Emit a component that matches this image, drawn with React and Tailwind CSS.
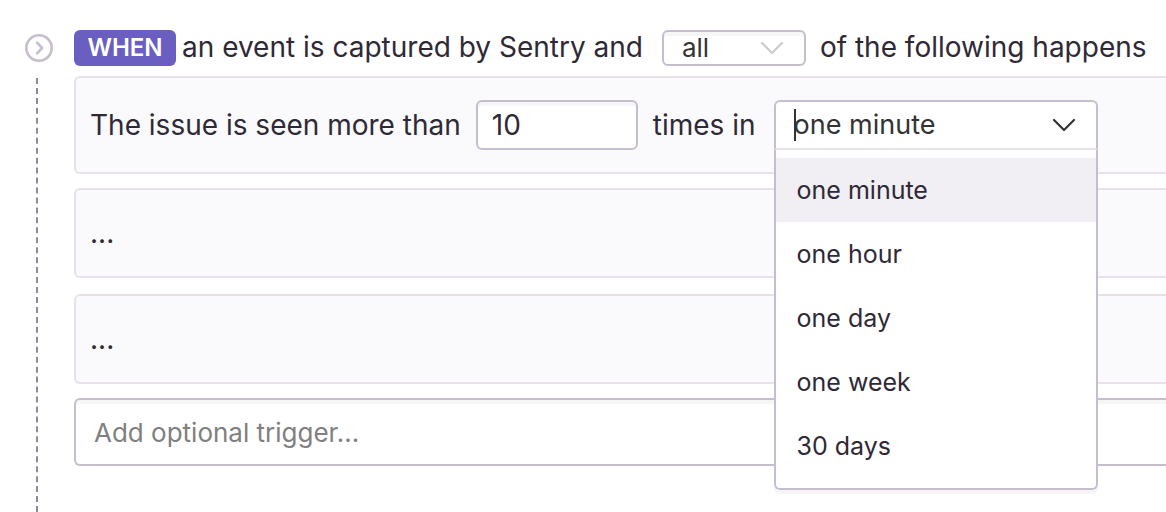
import { useState } from "react";

const intervals = ["one minute", "one hour", "one day", "one week", "30 days"];

function Chevron({ className }) {
  return (
    <svg viewBox="0 0 24 14" className={className} fill="none" stroke="currentColor" strokeWidth="2.2" strokeLinecap="round" strokeLinejoin="round" aria-hidden="true">
      <path d="M2 2 L12 12 L22 2" />
    </svg>
  );
}

function Condition({ children }) {
  return (
    <div className="flex min-h-[90px] items-center rounded-l-md border-2 border-r-0 border-[#e7e1ec] bg-[#fafafc] pl-3.5">
      {children}
    </div>
  );
}

function IntervalPicker() {
  const [value, setValue] = useState(intervals[0]);
  return (
    <div className="relative w-[324px]">
      <div className="relative flex h-[50px] items-center rounded-t-md border-2 border-[#c6becf] border-b-[#e7e1ec] bg-white pr-5 pl-[18px]">
        <span className="absolute left-[18px] h-8 w-0.5 bg-[#333333]" />
        <input
          role="combobox"
          aria-label="Interval"
          aria-expanded="true"
          aria-controls="interval-options"
          readOnly
          value={value}
          className="w-full min-w-0 bg-transparent text-[27px] leading-8 text-[#333333] outline-none"
        />
        <Chevron className="w-6 shrink-0 text-[#333333]" />
      </div>
      <ul
        id="interval-options"
        role="listbox"
        aria-label="Interval options"
        className="absolute inset-x-0 top-full z-10 rounded-b-md border-2 border-t-0 border-[#c6becf] bg-white pt-2 pb-2.5 shadow-[0_4px_0_rgba(43,34,51,0.04)]"
      >
        {intervals.map((item) => (
          <li
            key={item}
            role="option"
            aria-selected={item === value}
            onClick={() => setValue(item)}
            className="flex h-16 items-center px-[21px] text-[25px] leading-8 aria-selected:bg-[#f1eef4]"
          >
            {item}
          </li>
        ))}
      </ul>
    </div>
  );
}

export default function App() {
  return (
    <main className="flex min-h-screen flex-col overflow-hidden bg-white pt-[30px] font-['Inter',sans-serif] text-[28px] leading-[34px] whitespace-nowrap text-[#2f2936]">
      <div className="flex h-9 items-start">
        <div className="w-[74px] shrink-0 pt-[3px] pl-6">
          <svg viewBox="0 0 30 30" className="w-[30px]" fill="none" stroke="#c6becf" strokeWidth="2.6" strokeLinecap="round" strokeLinejoin="round" aria-hidden="true">
            <circle cx="15" cy="15" r="12.7" />
            <path d="M13 9.6 L18.2 15 L13 20.4" />
          </svg>
        </div>
        <span className="flex h-9 w-[102px] shrink-0 items-center justify-center rounded-md bg-[#6a5fc1] text-2xl font-semibold text-white">
          WHEN
        </span>
        <span className="ml-1.5">an event is captured by Sentry and</span>
        <div className="relative mr-3.5 ml-[19px] w-36 shrink-0">
          <select
            aria-label="Match"
            defaultValue="all"
            className="block h-9 w-full appearance-none rounded-md border-2 border-[#c6becf] bg-white pl-[18px] text-[26px] leading-8 text-[#333333] shadow-[inset_0_4px_0_rgba(43,34,51,0.04)] outline-none"
          >
            <option>all</option>
            <option>any</option>
            <option>none</option>
          </select>
          <Chevron className="pointer-events-none absolute top-[11px] right-[22px] w-6 text-[#cccccc]" />
        </div>
        <span>of the following happens</span>
      </div>

      <div className="mt-2.5 flex flex-1">
        <div className="mt-0.5 ml-9 w-[38px] shrink-0 border-l-2 border-dashed border-[#9386a0]" />
        <div className="flex min-w-0 flex-1 flex-col">
          <div className="flex h-[98px] items-center rounded-l-md border-2 border-r-0 border-[#e7e1ec] bg-[#fafafc] pl-3.5">
            <label htmlFor="count">The issue is seen more than</label>
            <input
              id="count"
              type="text"
              inputMode="numeric"
              defaultValue="10"
              className="mx-[15px] h-[50px] w-[162px] rounded-md border-2 border-[#c6becf] bg-white px-3.5 shadow-[inset_0_4px_0_rgba(43,34,51,0.04)] outline-none"
            />
            <span className="mr-[18px]">times in</span>
            <IntervalPicker />
          </div>
          <div className="mt-3.5 flex flex-col gap-4">
            <Condition>...</Condition>
            <Condition>...</Condition>
          </div>
          <input
            type="text"
            aria-label="Add optional trigger"
            placeholder="Add optional trigger..."
            className="mt-3.5 h-[68px] w-full rounded-l-md border-2 border-r-0 border-[#c6becf] bg-white px-[18px] text-[26px] shadow-[inset_0_4px_0_rgba(43,34,51,0.04)] outline-none placeholder:text-[#808080]"
          />
        </div>
      </div>
    </main>
  );
}
